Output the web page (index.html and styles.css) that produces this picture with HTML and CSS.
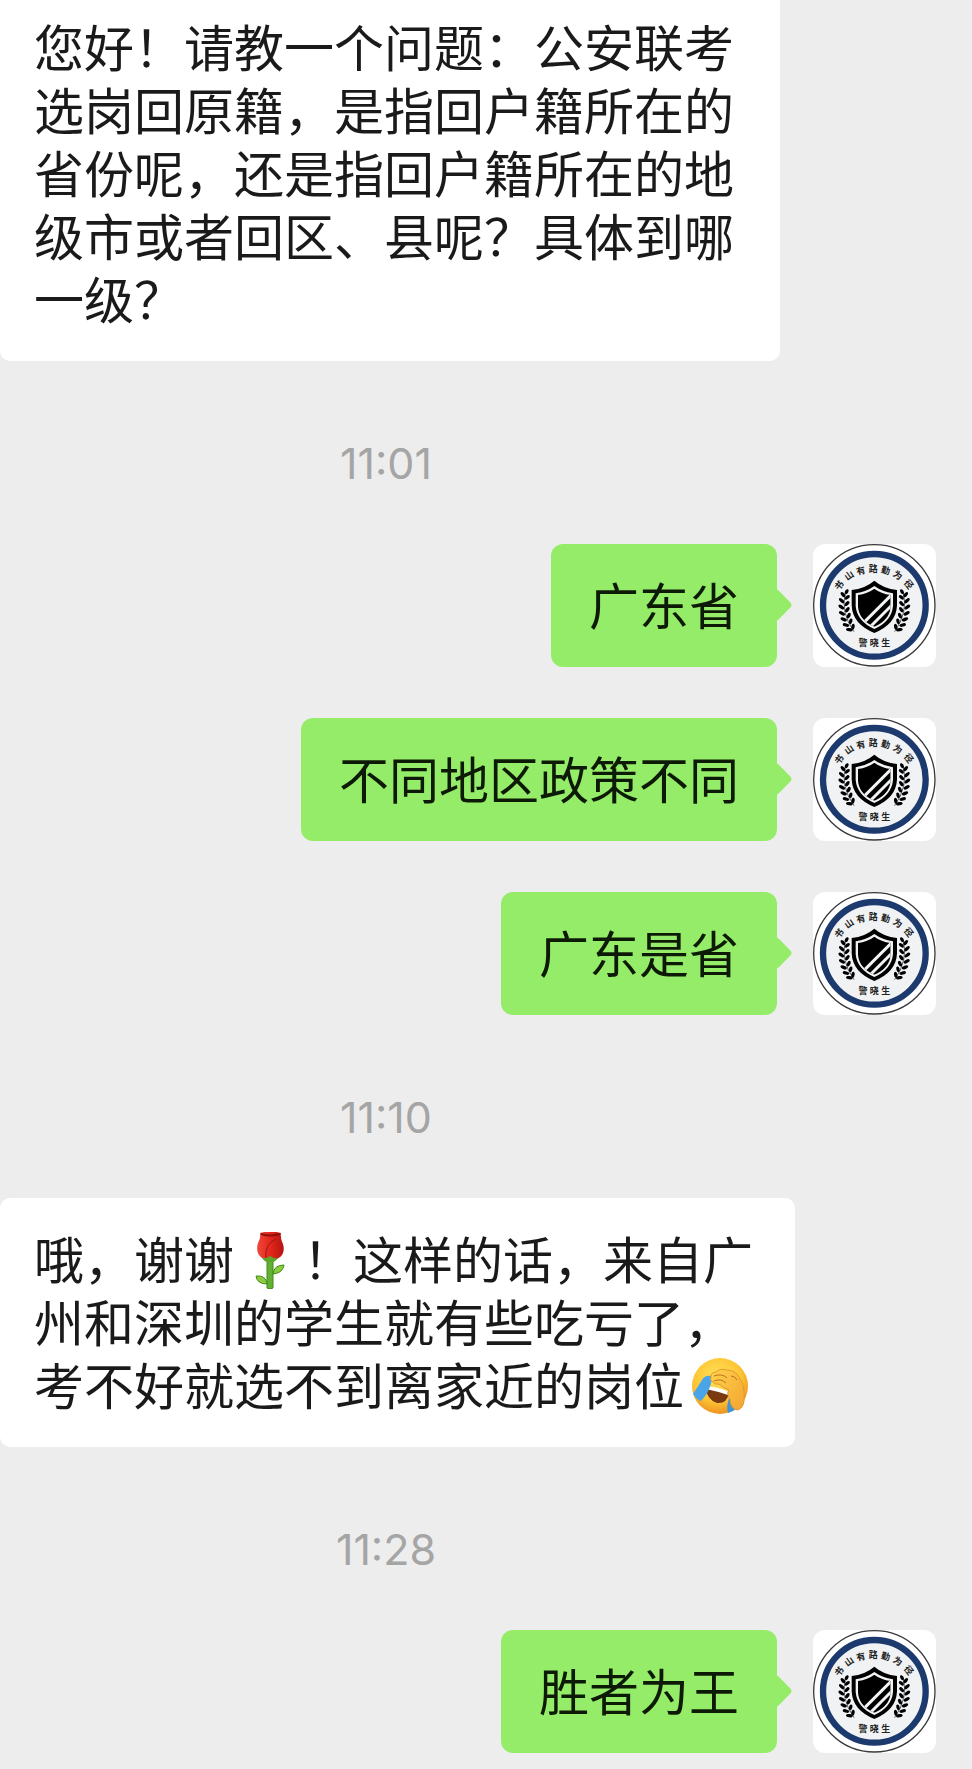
FILE: index.html
```
<!DOCTYPE html>
<html lang="zh-CN">
<head>
  <meta charset="UTF-8">
  <meta name="viewport" content="width=device-width, initial-scale=1.0">
  <title>聊天记录</title>
  <link rel="stylesheet" href="styles.css">
</head>
<body>
  <!-- Shared avatar badge -->
  <svg class="defs" width="0" height="0" aria-hidden="true">
    <defs>
      <g id="leaves">
        <ellipse cx="101" cy="143" rx="5" ry="8" transform="rotate(30 101 143)"/>
        <ellipse cx="90" cy="152" rx="5" ry="9" transform="rotate(-40 90 152)"/>
        <ellipse cx="103" cy="160" rx="5" ry="9" transform="rotate(50 103 160)"/>
        <ellipse cx="86" cy="170" rx="5" ry="10" transform="rotate(-45 86 170)"/>
        <ellipse cx="102" cy="179" rx="5" ry="9" transform="rotate(45 102 179)"/>
        <ellipse cx="85" cy="189" rx="5" ry="10" transform="rotate(-52 85 189)"/>
        <ellipse cx="103" cy="197" rx="5" ry="9" transform="rotate(36 103 197)"/>
        <ellipse cx="87" cy="208" rx="5" ry="10" transform="rotate(-60 87 208)"/>
        <ellipse cx="107" cy="215" rx="5" ry="9" transform="rotate(26 107 215)"/>
        <ellipse cx="92" cy="226" rx="5" ry="10" transform="rotate(-68 92 226)"/>
        <ellipse cx="113" cy="232" rx="5" ry="9" transform="rotate(16 113 232)"/>
        <ellipse cx="99" cy="243" rx="5" ry="10" transform="rotate(-76 99 243)"/>
        <ellipse cx="120" cy="248" rx="5" ry="9" transform="rotate(6 120 248)"/>
        <ellipse cx="109" cy="257" rx="5" ry="10" transform="rotate(-82 109 257)"/>
        <path d="M97 146Q82 205 123 263" fill="none" stroke="#111" stroke-width="2"/>
      </g>
      <clipPath id="shield-core">
        <path d="M184 134Q204 149 233 153V188Q230 228 184 248Q138 228 135 188V153Q164 149 184 134Z"/>
      </clipPath>
      <symbol id="badge" viewBox="0 0 369 369">
        <rect width="369" height="369" fill="#fff"/>
        <circle cx="184" cy="184" r="182" fill="#fff" stroke="#3a3a3a" stroke-width="4"/>
        <circle cx="184" cy="184" r="154" fill="#f1f2f4" stroke="#1d3a6e" stroke-width="19"/>
        <g class="badge-text">
          <text transform="translate(79 125) rotate(-52)" y="9">书</text>
          <text transform="translate(109 95) rotate(-35)" y="9">山</text>
          <text transform="translate(144 81) rotate(-14)" y="9">有</text>
          <text transform="translate(181 76)" y="9">路</text>
          <text transform="translate(218 80) rotate(14)" y="9">勤</text>
          <text transform="translate(254 94) rotate(33)" y="9">为</text>
          <text transform="translate(287 121) rotate(52)" y="9">径</text>
          <text x="150" y="305">警</text>
          <text x="184" y="305">晓</text>
          <text x="218" y="305">生</text>
        </g>
        <use href="#leaves"/>
        <use href="#leaves" transform="translate(368 0) scale(-1 1)"/>
        <path d="M184 110Q212 134 252 138V184Q250 240 184 267Q118 240 116 184V138Q156 134 184 110Z" fill="#000"/>
        <path d="M184 126Q208 143 240 148V186Q236 232 184 255Q132 232 128 186V148Q160 143 184 126Z" fill="#f1f2f4"/>
        <g clip-path="url(#shield-core)">
          <rect x="116" y="110" width="136" height="157"/>
          <path d="M242 146L150 238M244 176L168 252" fill="none" stroke="#f1f2f4" stroke-width="9"/>
          <path d="M244 204L190 258" fill="none" stroke="#f1f2f4" stroke-width="5"/>
        </g>
      </symbol>
      <linearGradient id="petal" x1="0" x2="1">
        <stop offset="0" stop-color="#f0483c"/>
        <stop offset=".5" stop-color="#e3261c"/>
        <stop offset="1" stop-color="#b31510"/>
      </linearGradient>
      <radialGradient id="face" cx=".45" cy=".35" r=".65">
        <stop offset="0" stop-color="#ffe25a"/>
        <stop offset=".65" stop-color="#fdc535"/>
        <stop offset="1" stop-color="#ee9322"/>
      </radialGradient>
      <linearGradient id="hand" x1="0" y1="0" x2="1" y2="1">
        <stop offset="0" stop-color="#ffd24c"/>
        <stop offset="1" stop-color="#f3a431"/>
      </linearGradient>
    </defs>
  </svg>

  <main class="chat">
    <div class="row">
      <p class="bubble first">您好！请教一个问题：公安联考选岗回原籍，是指回户籍所在的省份呢，还是指回户籍所在的地级市或者回区、县呢？具体到哪一级？</p>
    </div>

    <time class="time">11:01</time>

    <div class="row mine">
      <p class="bubble">广东省</p>
      <svg class="avatar" role="img" aria-label="头像"><use href="#badge"/></svg>
    </div>
    <div class="row mine">
      <p class="bubble">不同地区政策不同</p>
      <svg class="avatar" role="img" aria-label="头像"><use href="#badge"/></svg>
    </div>
    <div class="row mine">
      <p class="bubble">广东是省</p>
      <svg class="avatar" role="img" aria-label="头像"><use href="#badge"/></svg>
    </div>

    <time class="time">11:10</time>

    <div class="row">
      <p class="bubble wide">哦，谢谢<svg class="emoji" viewBox="0 0 57 57" role="img" aria-label="玫瑰">
          <path d="M25 26H31V56Q28 58 25 56Z" fill="#62b132" stroke="#3f8a1d"/>
          <path d="M31 42Q32 33 42 33Q41 41 31 42Z" fill="#8ccc3d" stroke="#3f8a1d"/>
          <path d="M25 52Q15 52 14 44Q24 43 25 52Z" fill="#8ccc3d" stroke="#3f8a1d"/>
          <path d="M18 1Q28 -2 39 1Q38 6 41 12Q44 23 35 27Q28 30 20 26Q13 21 16 11Q19 6 18 1Z" fill="url(#petal)"/>
          <path d="M19 2Q28 5 38 2" fill="none" stroke="#8f100c" stroke-width="2"/>
          <path d="M34 7Q22 12 24 27" fill="none" stroke="#9e1510" stroke-width="1"/>
          <path d="M20 26Q24 27 28 24Q32 27 36 26Q33 31 28 30Q23 31 20 26Z" fill="#5da52c"/>
        </svg>！这样的话，来自广州和深圳的学生就有些吃亏了，考不好就选不到离家近的岗位<svg class="emoji" viewBox="0 0 57 57" role="img" aria-label="笑哭捂脸">
          <circle cx="28" cy="28" r="28" fill="url(#face)"/>
          <path d="M14 29Q25 30 37 35Q35 46 25 45Q14 41 14 29Z" fill="#7a3911"/>
          <path d="M14 28Q26 29 38 34L36 37Q24 33 14 31Z" fill="#fff"/>
          <path d="M19 18Q13 17 10 22L1 36Q5 42 9 43Q18 34 20 21Z" fill="#4aa5e8"/>
          <path d="M37 40Q34 50 36 55Q42 53 45 50Z" fill="#3d96dc"/>
          <path d="M19 19Q18 15 24 14Q28 10 35 12Q45 12 49 23Q53 29 52 43Q51 51 45 52Q38 50 38 41Q34 36 37 32Q31 30 27 26Q22 27 21 24Q17 22 19 19Z" fill="url(#hand)" stroke="#e3982b"/>
          <path d="M22 18Q30 15 35 20M22 23Q29 20 34 25M39 18Q43 18 45 22" fill="none" stroke="#bd711b"/>
        </svg></p>
    </div>

    <time class="time">11:28</time>

    <div class="row mine">
      <p class="bubble">胜者为王</p>
      <svg class="avatar" role="img" aria-label="头像"><use href="#badge"/></svg>
    </div>
  </main>
</body>
</html>
```
FILE: styles.css
```
body {
  margin: 0;
  background-color: #ededed;
  color: #1a1a1a;
  font-family: "Noto Sans CJK SC", sans-serif;
  font-size: 50px;
  line-height: 63px;
}
.defs {
  position: absolute;
}
.chat {
  display: flex;
  flex-direction: column;
  padding-bottom: 16px;
}
.row {
  display: flex;
}
.mine {
  justify-content: flex-end;
  gap: 36px;
  padding-right: 36px;
}
.mine + .mine {
  margin-top: 51px;
}
.bubble {
  position: relative;
  box-sizing: border-box;
  max-width: 780px;
  margin: 0;
  padding: 28px 46px 32px 34px;
  background-color: #fff;
  border-radius: 10px;
}
.first {
  padding-top: 14px;
  border-top-left-radius: 0;
  border-top-right-radius: 0;
}
.wide {
  max-width: 795px;
  padding-right: 40px;
}
.mine .bubble {
  padding: 28px 38px 32px;
  background-color: #95ec69;
  color: #0d1a06;
  border-radius: 12px;
}
/* little tail pointing at the avatar */
.mine .bubble::after {
  content: "";
  position: absolute;
  top: 50%;
  right: -11px;
  width: 24px;
  height: 24px;
  margin-top: -13px;
  background-color: #95ec69;
  border-radius: 4px;
  transform: rotate(45deg);
}
.avatar {
  flex: none;
  width: 123px;
  height: 123px;
  border-radius: 12px;
}
.badge-text {
  font-size: 27px;
  font-weight: bold;
  text-anchor: middle;
  fill: #222;
}
.emoji {
  width: 57px;
  height: 57px;
  margin: -8px 4px -10px 8px;
}
.time {
  margin: 77px 200px 56px 0;
  color: #a5a5a5;
  font-family: Inter, sans-serif;
  font-size: 43px;
  line-height: 50px;
  text-align: center;
}
```
